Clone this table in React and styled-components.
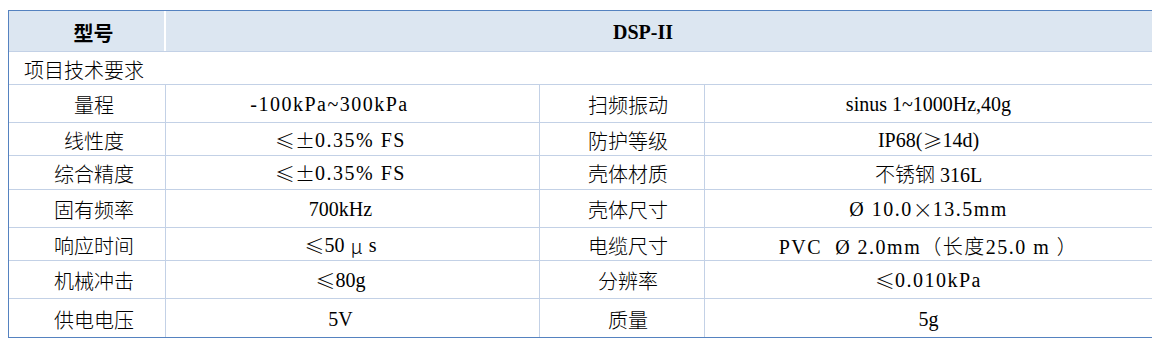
import React from "react";
import styled, { createGlobalStyle } from "styled-components";

const GlobalStyle = createGlobalStyle`
  body {
    margin: 10px 8px 8px 8px;
    background: #ffffff;
    font-family: "Liberation Serif", "Noto Sans CJK SC", serif;
    color: #000000;
  }
`;

const COLS = "157px 374px 165px 1fr";

const Table = styled.div`
  width: 1145px;
  box-sizing: border-box;
  border: 1px solid #5582c0;
`;

const HeadRow = styled.div`
  display: grid;
  grid-template-columns: 157px 1fr;
  height: 41px;
  box-sizing: border-box;
  background: #dce6f1;
  border-bottom: 1px solid #c3d1e6;
`;

const HeadCell = styled.div`
  display: flex;
  align-items: center;
  justify-content: center;
  font-size: 20px;
  font-weight: bold;
  padding: ${(p) => p.$pad || "0"};
  border-right: ${(p) => (p.$last ? "none" : "2px solid #ffffff")};
`;

const SectionRow = styled.div`
  height: 33px;
  box-sizing: border-box;
  display: flex;
  align-items: center;
  padding: 2px 0 0 15px;
  font-size: 20px;
  font-weight: 300;
  border-bottom: 1px solid #c3d1e6;
`;

const Row = styled.div`
  display: grid;
  grid-template-columns: ${COLS};
  height: ${(p) => p.$h}px;
  box-sizing: border-box;
  border-bottom: ${(p) => (p.$last ? "none" : "1px solid #c3d1e6")};
`;

const Cell = styled.div`
  display: flex;
  align-items: center;
  justify-content: center;
  padding: ${(p) => p.$pad || "2px 0 0 0"};
  font-size: 20px;
  font-weight: 300;
  white-space: pre;
  letter-spacing: ${(p) => (p.$mono ? "1.5px" : "normal")};
  border-right: 1px solid #c3d1e6;
  &:last-child {
    border-right: none;
  }
`;

// full-width symbols, as the source font draws them
const Sym = styled.span`
  font-family: "Noto Sans CJK SC", sans-serif;
  font-weight: 300;
  letter-spacing: 0;
  padding: ${(p) => (p.$wide ? "0 6px" : "0")};
`;

const rows = [
  { h: 38, a: "量程", b: "-100kPa~300kPa", bm: true, bp: "2px 46px 0 0", c: "扫频振动", d: "sinus 1~1000Hz,40g" },
  { h: 33, a: "线性度", b: <><Sym>≤±</Sym>0.35% FS</>, bm: true, c: "防护等级", d: <>IP68(<Sym>≥</Sym>14d)</> },
  { h: 34, a: "综合精度", b: <><Sym>≤±</Sym>0.35% FS</>, bm: true, c: "壳体材质", d: "不锈钢 316L" },
  { h: 38, a: "固有频率", b: "700kHz", c: "壳体尺寸", d: <>Ø 10.0<Sym>×</Sym>13.5mm</>, dm: true },
  { h: 33, a: "响应时间", b: <><Sym>≤</Sym>50<Sym $wide>μ</Sym>s</>, c: "电缆尺寸", d: "PVC  Ø 2.0mm（长度25.0 m ）", dm: true },
  { h: 38, a: "机械冲击", b: <><Sym>≤</Sym>80g</>, c: "分辨率", d: <><Sym>≤</Sym>0.010kPa</>, dm: true },
  { h: 38, a: "供电电压", b: "5V", c: "质量", d: "5g" },
];

export default function App() {
  return (
    <>
      <GlobalStyle />
      <Table>
        <HeadRow>
          <HeadCell $pad="2px 0 0 14px">型号</HeadCell>
          <HeadCell $last $pad="2px 32px 0 0">DSP-II</HeadCell>
        </HeadRow>
        <SectionRow>项目技术要求</SectionRow>
        {rows.map((r, i) => (
          <Row key={i} $h={r.h} $last={i === rows.length - 1}>
            <Cell $pad="2px 0 0 14px">{r.a}</Cell>
            <Cell $pad={r.bp || "2px 24px 0 0"} $mono={r.bm}>{r.b}</Cell>
            <Cell $pad="2px 0 0 12px">{r.c}</Cell>
            <Cell $mono={r.dm}>{r.d}</Cell>
          </Row>
        ))}
      </Table>
    </>
  );
}
